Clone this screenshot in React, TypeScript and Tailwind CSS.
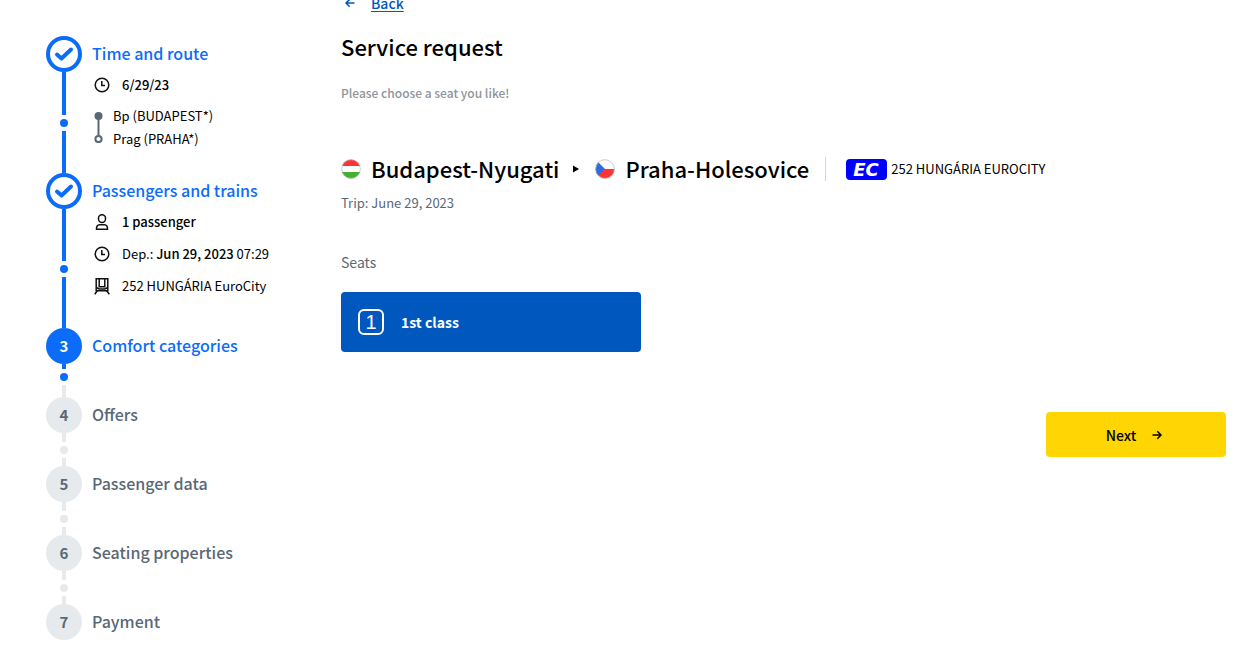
import { useState, type ReactNode } from "react";

type StepState = "done" | "current" | "upcoming";

const UPCOMING_STEPS = ["Offers", "Passenger data", "Seating properties", "Payment"];

function ClockIcon() {
  return (
    <svg aria-hidden="true" viewBox="0 0 16 16" className="size-4" fill="none" stroke="#111" strokeWidth="1.5">
      <circle cx="8" cy="8" r="6.8" />
      <path d="M7.8 4v4.5H11" />
    </svg>
  );
}

function PersonIcon() {
  return (
    <svg aria-hidden="true" viewBox="0 0 16 16" className="size-4" fill="none" stroke="#111" strokeWidth="1.5">
      <rect x="4.5" y="0.7" width="7" height="7.8" rx="3.4" />
      <path d="M2.5 15.25c-.2-2.7.9-4.5 3-4.5h5c2.1 0 3.200 1.800 3 4.500z" />
    </svg>
  );
}

function TrainIcon() {
  return (
    <svg aria-hidden="true" viewBox="0 0 16 18" className="h-[18px] w-4" fill="none" stroke="#111" strokeWidth="1.5">
      <path d="M2.2 1.75h11.600v12H2.200z" />
      <path d="M5.200 1.750v8h5.600v-8" />
      <path d="M2.200 10.500l3 1.500h5.600l3-1.500M3.500 13.500L.7 17.300M12.500 13.500l2.800 3.800" />
    </svg>
  );
}

function ArrowIcon({ back = false }: { back?: boolean }) {
  return (
    <svg
      aria-hidden="true"
      viewBox="0 0 10 10"
      className="size-2.5"
      fill="none"
      stroke="currentColor"
      strokeWidth="1.5"
    >
      {back ? <path d="M9.500 5H1M4.700 1.300L1 5l3.700 3.700" /> : <path d="M.5 5H9M5.300 1.300L9 5 5.300 8.700" />}
    </svg>
  );
}

function HungaryFlag() {
  return (
    <svg role="img" aria-label="Hungary" viewBox="0 0 20 20" className="size-5 shrink-0">
      <clipPath id="flag-hu">
        <circle cx="10" cy="10" r="9.500" />
      </clipPath>
      <g clipPath="url(#flag-hu)">
        <path fill="#fff" d="M0 0h20v20H0z" />
        <path fill="#fb3535" d="M0 0h20v7H0z" />
        <path fill="#43b02f" d="M0 13h20v7H0z" />
      </g>
      <circle cx="10" cy="10" r="9.300" fill="none" stroke="#b5b5b5" strokeOpacity=".7" />
    </svg>
  );
}

function CzechFlag() {
  return (
    <svg role="img" aria-label="Czechia" viewBox="0 0 20 20" className="size-5 shrink-0">
      <clipPath id="flag-cz">
        <circle cx="10" cy="10" r="9.500" />
      </clipPath>
      <g clipPath="url(#flag-cz)">
        <path fill="#fff" d="M0 0h20v10H0z" />
        <path fill="#fb3535" d="M0 10h20v10H0z" />
        <path fill="#2f6bdf" d="M0 0l10 10L0 20z" />
      </g>
      <circle cx="10" cy="10" r="9.300" fill="none" stroke="#b5b5b5" strokeOpacity=".7" />
    </svg>
  );
}

function StepMarker({ state, number }: { state: StepState; number: number }) {
  if (state === "done") {
    return (
      <span className="flex size-9 items-center justify-center rounded-full border-4 border-[#0a6cf9] text-[#0a6cf9]">
        <svg aria-hidden="true" viewBox="0 0 20 16" className="h-4 w-5" fill="none" stroke="currentColor" strokeWidth="4">
          <path d="M3 8.500l4.500 4L17 3.500" strokeLinecap="round" strokeLinejoin="round" />
        </svg>
      </span>
    );
  }
  return (
    <span
      className={
        state === "current"
          ? "flex size-9 items-center justify-center rounded-full bg-[#0a6cf9] text-[15px] font-bold text-white"
          : "flex size-9 items-center justify-center rounded-full bg-[#e6eaed] text-[15px] font-bold text-[#5a6876]"
      }
    >
      {number}
    </span>
  );
}

interface StepProps {
  number: number;
  title: string;
  state: StepState;
  last?: boolean;
  children?: ReactNode;
}

function Step({ number, title, state, last = false, children }: StepProps) {
  const active = state !== "upcoming";
  const lineColor = active ? "bg-[#0a6cf9]" : "bg-[#e6eaed]";
  return (
    <li className="flex gap-2.5">
      <div className="flex w-9 shrink-0 flex-col items-center">
        <StepMarker state={state} number={number} />
        {!last && (
          <>
            <span className={`w-1 ${lineColor} ${state === "current" ? "h-[5px]" : "flex-1"}`} />
            <span className={`my-1 size-2 rounded-full ${lineColor}`} />
            <span className={`w-1 flex-1 ${state === "done" ? "bg-[#0a6cf9]" : "bg-[#e6eaed]"}`} />
          </>
        )}
      </div>
      <div className={last || children ? "" : "pb-[35px]"}>
        <h2 className={`text-base/[34px] font-medium ${active ? "text-[#0a6cf9]" : "text-[#5a6876]"}`}>{title}</h2>
        {children}
      </div>
    </li>
  );
}

function Detail({ icon, children }: { icon: ReactNode; children: ReactNode }) {
  return (
    <div className="flex h-7 items-center gap-3 pl-0.5 text-[13px]">
      {icon}
      <p>{children}</p>
    </div>
  );
}

export default function App() {
  const [selected, setSelected] = useState(true);

  return (
    <div className="flex items-start bg-white pl-[46px] font-['Noto_Sans_CJK_JP',sans-serif] text-black">
      <aside className="w-[295px] shrink-0 pt-9">
        <ol>
          <Step number={1} title="Time and route" state="done">
            <div className="flex flex-col gap-[5px] pt-px pb-[23px]">
              <Detail icon={<ClockIcon />}>
                <b className="font-medium">6/29/23</b>
              </Detail>
              <div className="flex items-center gap-2.5 pl-0.5">
                <svg aria-hidden="true" viewBox="0 0 9 32" className="h-8 w-[9px]" fill="#5a6876">
                  <path d="M3.500 4h2v21h-2z" />
                  <circle cx="4.500" cy="5" r="4" />
                  <circle cx="4.500" cy="28" r="3.100" fill="#fff" stroke="#5a6876" strokeWidth="2" />
                </svg>
                <div className="text-[13px]/[23px]">
                  <p>Bp (BUDAPEST*)</p>
                  <p>Prag (PRAHA*)</p>
                </div>
              </div>
            </div>
          </Step>
          <Step number={2} title="Passengers and trains" state="done">
            <div className="flex flex-col gap-1 pt-px pb-7">
              <Detail icon={<PersonIcon />}>
                <b className="font-medium">1 passenger</b>
              </Detail>
              <Detail icon={<ClockIcon />}>
                Dep.: <b className="font-medium">Jun 29, 2023</b> 07:29
              </Detail>
              <Detail icon={<TrainIcon />}>252 HUNGÁRIA EuroCity</Detail>
            </div>
          </Step>
          <Step number={3} title="Comfort categories" state="current" />
          {UPCOMING_STEPS.map((title, i) => (
            <Step
              key={title}
              number={i + 4}
              title={title}
              state="upcoming"
              last={i === UPCOMING_STEPS.length - 1}
            />
          ))}
        </ol>
      </aside>

      <main className="min-w-0 flex-1 pr-[22px]">
        <a href="#back" className="-mt-[9px] flex h-6 items-center gap-4 pl-1 text-sm font-medium text-[#0057be]">
          <ArrowIcon back />
          <span className="underline underline-offset-2">Back</span>
        </a>
        <h1 className="mt-[15px] text-[22px]/8 font-medium">Service request</h1>
        <p className="mt-[21px] text-xs/5 font-medium text-[#8f9499]">Please choose a seat you like!</p>

        <div className="mt-[50px] flex h-8 items-center">
          <HungaryFlag />
          <span className="ml-2.5 pb-0.5 text-[22px]/8 font-medium">Budapest-Nyugati</span>
          <svg aria-hidden="true" viewBox="0 0 6 8" className="mr-4 ml-3.5 h-2 w-1.5">
            <path d="M0 .5L6 4 0 7.500z" />
          </svg>
          <CzechFlag />
          <span className="ml-2.5 pb-0.5 text-[22px]/8 font-medium">Praha-Holesovice</span>
          <span className="mr-5 ml-4 h-6 w-px bg-[#d5d8db]" />
          <svg role="img" aria-label="EuroCity" viewBox="0 0 41 21" className="h-[21px] w-[41px]">
            <rect width="41" height="21" rx="4" fill="#0000ff" />
            <text
              x="20"
              y="17"
              textAnchor="middle"
              fill="#fff"
              fontFamily="DejaVu Sans"
              fontSize="18"
              fontWeight="bold"
              fontStyle="italic"
            >
              EC
            </text>
          </svg>
          <span className="ml-1 text-[13px]">252 HUNGÁRIA EUROCITY</span>
        </div>
        <p className="mt-2 text-[13px]/5 text-[#5a6876]">
          Trip: <time>June 29, 2023</time>
        </p>

        <h3 className="mt-[37px] text-sm/6 text-[#5a6876]">Seats</h3>
        <button
          type="button"
          aria-pressed={selected}
          onClick={() => setSelected((prev) => !prev)}
          className="mt-[18px] flex h-[60px] w-[300px] items-center gap-[17px] rounded bg-[#0057be] px-[17px] text-sm font-bold text-white"
        >
          <span className="flex size-[26px] items-center justify-center rounded-md border-2 border-white font-['Liberation_Sans',sans-serif] text-xl font-normal">
            1
          </span>
          1st class
        </button>

        <div className="mt-[60px] flex justify-end">
          <button
            type="button"
            className="flex h-[45px] w-[180px] items-center justify-center gap-4 rounded bg-[#ffd503] pr-1 text-sm font-medium"
          >
            Next
            <ArrowIcon />
          </button>
        </div>
      </main>
    </div>
  );
}
